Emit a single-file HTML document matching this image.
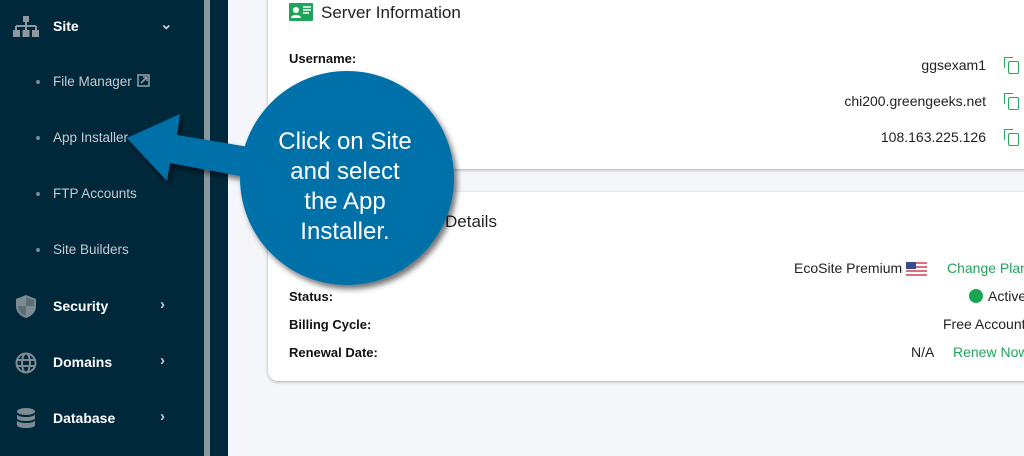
<!DOCTYPE html>
<html><head><style>
*{margin:0;padding:0;box-sizing:border-box}
body{width:1024px;height:456px;overflow:hidden;background:#f5f6fa;font-family:"Liberation Sans",Arial,sans-serif;position:relative}
.sb{position:absolute;left:0;top:0;width:228px;height:456px;background:#00283b}
.bar{position:absolute;left:204px;top:0;width:6px;height:456px;background:#8a999f}
.t{position:absolute;color:#fff;font-size:14px;font-weight:bold}
.s{position:absolute;color:#c3cbd0;font-size:13.5px}
.dot{position:absolute;left:36px;width:4px;height:4px;border-radius:50%;background:#7d8b92}
.chev{position:absolute;left:160px;color:#c3cbd0;font-size:15px;font-weight:bold}
.card{position:absolute;left:268px;width:780px;background:#fff;border-radius:10px;box-shadow:0 1px 3px rgba(0,0,0,.3)}
.l{position:absolute;left:289px;font-size:13px;font-weight:bold;color:#111}
.r{position:absolute;font-size:14px;color:#222;text-align:right;white-space:nowrap}
.g{color:#1fa55a}
.cp{position:absolute;left:1008px;width:11px;height:13px;border:1.5px solid #27a85a;border-radius:2px}
.cp:before{content:"";position:absolute;left:-5px;top:-5px;width:8px;height:10px;border-left:1.5px solid #27a85a;border-top:1.5px solid #27a85a}
</style></head><body>
<div class="sb"></div><div class="bar"></div>
<svg style="position:absolute;left:13px;top:16px" width="26" height="22" viewBox="0 0 26 22"><rect x="10" y="0" width="6" height="6" fill="#8b9aa1"/><path d="M13 6v4M3 10h20M3 10v4M13 10v4M23 10v4" stroke="#8b9aa1" stroke-width="2" fill="none"/><rect x="0" y="14" width="7" height="7" fill="#8b9aa1"/><rect x="9.5" y="14" width="7" height="7" fill="#8b9aa1"/><rect x="19" y="14" width="7" height="7" fill="#8b9aa1"/></svg>
<div class="t" style="left:53px;top:18px">Site</div><div class="chev" style="top:15px">⌄</div>
<div class="dot" style="top:80px"></div><div class="s" style="left:53px;top:74px">File Manager</div>
<svg style="position:absolute;left:137px;top:74px" width="13" height="13" viewBox="0 0 13 13"><rect x="1" y="1" width="11" height="11" stroke="#8b9aa1" stroke-width="1.6" fill="none"/><path d="M4 9 10 3M6 3h4v4" stroke="#8b9aa1" stroke-width="1.6" fill="none"/></svg>
<div class="dot" style="top:136px"></div><div class="s" style="left:53px;top:130px">App Installer</div>
<div class="dot" style="top:192px"></div><div class="s" style="left:53px;top:186px">FTP Accounts</div>
<div class="dot" style="top:248px"></div><div class="s" style="left:53px;top:242px">Site Builders</div>
<svg style="position:absolute;left:16px;top:295px" width="20" height="23" viewBox="0 0 20 23"><path d="M10 0 0 4v7c0 6 4 10 10 12 6-2 10-6 10-12V4z" fill="#7d8c93"/><path d="M10 11H2c0 5 3 8 8 10zM10 2v9h8V5z" fill="#5d6d75"/></svg>
<div class="t" style="left:53px;top:298px">Security</div><div class="chev" style="top:296px">›</div>
<svg style="position:absolute;left:15px;top:352px" width="22" height="22" viewBox="0 0 22 22" fill="none" stroke="#7d8c93" stroke-width="2"><circle cx="11" cy="11" r="9.5"/><ellipse cx="11" cy="11" rx="4" ry="9.5"/><path d="M2 8h18M2 14h18"/></svg>
<div class="t" style="left:53px;top:354px">Domains</div><div class="chev" style="top:352px">›</div>
<svg style="position:absolute;left:17px;top:408px" width="18" height="21" viewBox="0 0 18 21"><ellipse cx="9" cy="3.5" rx="9" ry="3.5" fill="#7d8c93"/><path d="M0 6c0 4 18 4 18 0v4c0 4-18 4-18 0zM0 12c0 4 18 4 18 0v5c0 4-18 4-18 0z" fill="#7d8c93"/></svg>
<div class="t" style="left:53px;top:410px">Database</div><div class="chev" style="top:408px">›</div>

<div class="card" style="top:-10px;height:179px"></div>
<svg style="position:absolute;left:289px;top:3px" width="24" height="18" viewBox="0 0 24 18"><rect width="24" height="18" rx="1" fill="#1fa55a"/><circle cx="7" cy="7" r="3" fill="#fff"/><path d="M2 15c0-4 10-4 10 0z" fill="#fff"/><path d="M14 4h8M14 7h8M14 10h6" stroke="#fff" stroke-width="1.5"/></svg>
<div style="position:absolute;left:321px;top:3px;font-size:17px;color:#222">Server Information</div>
<div class="l" style="top:51px">Username:</div>
<div class="r" style="right:38px;top:57px">ggsexam1</div><div class="cp" style="top:61px"></div>
<div class="r" style="right:38px;top:93px">chi200.greengeeks.net</div><div class="cp" style="top:97px"></div>
<div class="r" style="right:38px;top:129px">108.163.225.126</div><div class="cp" style="top:133px"></div>

<div class="card" style="top:192px;height:189px"></div>
<div style="position:absolute;left:445px;top:212px;font-size:17px;color:#222">Details</div>
<div class="l" style="top:289px">Status:</div>
<div class="l" style="top:317px">Billing Cycle:</div>
<div class="l" style="top:345px">Renewal Date:</div>
<div class="r" style="left:794px;top:260px">EcoSite Premium</div>
<svg style="position:absolute;left:906px;top:262px" width="21" height="14" viewBox="0 0 21 14"><rect width="21" height="14" fill="#fff"/><path d="M0 1h21M0 5h21M0 9h21M0 13h21" stroke="#d04050" stroke-width="1.6"/><rect width="10" height="7" fill="#3b4a8c"/></svg>
<div class="r g" style="left:947px;top:260px">Change Plan</div>
<div style="position:absolute;left:969px;top:289px;width:14px;height:14px;border-radius:50%;background:#19a553"></div>
<div class="r" style="left:988px;top:288px">Active</div>
<div class="r" style="left:943px;top:316px">Free Account</div>
<div class="r" style="left:911px;top:344px">N/A</div>
<div class="r g" style="left:953px;top:344px">Renew Now</div>

<svg style="position:absolute;left:0;top:0" width="1024" height="456">
<defs><filter id="sh" x="-20%" y="-20%" width="150%" height="150%"><feDropShadow dx="3" dy="4" stdDeviation="3" flood-color="#000" flood-opacity=".55"/></filter></defs>
<g filter="url(#sh)" fill="#0070a8">
<polygon points="127,138 180,114 177,135 255,148 250,178 170,163 167,181"/>
<circle cx="347" cy="178" r="107"/>
</g>
<g fill="#fff" font-family="Liberation Sans,Arial,sans-serif" font-size="24" text-anchor="middle">
<text x="345" y="149">Click on Site</text>
<text x="345" y="179">and select</text>
<text x="345" y="209">the App</text>
<text x="345" y="239">Installer.</text>
</g>
</svg>
</body></html>
